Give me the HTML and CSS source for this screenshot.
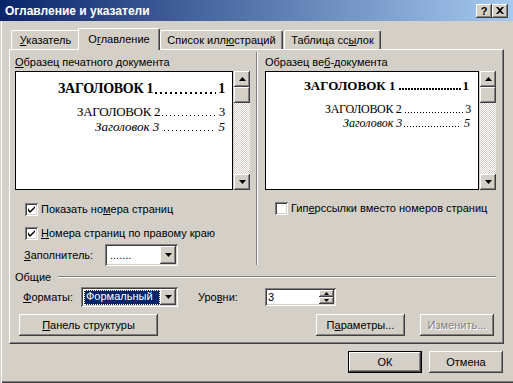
FILE: index.html
```html
<!DOCTYPE html>
<html lang="ru">

<head>
    <meta charset="UTF-8">
    <title>Оглавление и указатели</title>
    <link rel="stylesheet" href="styles.css">
</head>

<body>
    <div class="window">
        <div class="titlebar">
            <span class="title">Оглавление и указатели</span>
            <div class="title-buttons">
                <div class="tb-btn help">?</div>
                <div class="tb-btn close">
                    <svg width="8" height="7" viewBox="0 0 8 7"><path d="M0 0 L2 0 L4 2 L6 0 L8 0 L5 3.5 L8 7 L6 7 L4 5 L2 7 L0 7 L3 3.5 Z" fill="#000"/></svg>
                </div>
            </div>
        </div>

        <div class="content">
            <div class="tabs">
                <div class="tab tab-index"><u>У</u>казатель</div>
                <div class="tab tab-toc active">О<u>г</u>лавление</div>
                <div class="tab tab-figures">Список илл<u>ю</u>страций</div>
                <div class="tab tab-auth">Таблица сс<u>ы</u>лок</div>
            </div>

            <div class="panel">
                <div class="samples">
                    <div class="group group-print">
                        <div class="group-label"><u>О</u>бразец печатного документа</div>
                        <div class="preview">
                            <div class="sheet sheet-print">
                                <div class="toc toc1"><span>ЗАГОЛОВОК 1</span><span class="dots"></span><span>1</span></div>
                                <div class="toc toc2"><span>ЗАГОЛОВОК 2</span><span class="dots"></span><span>3</span></div>
                                <div class="toc toc3"><span>Заголовок 3</span><span class="dots"></span><span>5</span></div>
                            </div>
                            <div class="scrollbar">
                                <div class="sb-btn"><svg width="7" height="4"><polygon points="3.5,0 7,4 0,4" fill="#000"/></svg></div>
                                <div class="sb-thumb"></div>
                                <div class="sb-track"></div>
                                <div class="sb-btn"><svg width="7" height="4"><polygon points="0,0 7,0 3.5,4" fill="#000"/></svg></div>
                            </div>
                        </div>
                        <div class="check-row first">
                            <span class="checkbox"><svg width="7" height="7"><path d="M0 2 L0 5 L2 7 L7 2 L7 0 L2 5 Z" fill="#000"/></svg></span>
                            <span>Показать но<u>м</u>ера страниц</span>
                        </div>
                        <div class="check-row">
                            <span class="checkbox"><svg width="7" height="7"><path d="M0 2 L0 5 L2 7 L7 2 L7 0 L2 5 Z" fill="#000"/></svg></span>
                            <span><u>Н</u>омера страниц по правому краю</span>
                        </div>
                        <div class="filler-row">
                            <span class="field-label"><u>З</u>аполнитель:</span>
                            <div class="combo combo-filler">
                                <span class="combo-value">.......</span>
                                <div class="combo-btn"><svg width="7" height="4"><polygon points="0,0 7,0 3.5,4" fill="#000"/></svg></div>
                            </div>
                        </div>
                    </div>

                    <div class="vsep"></div>

                    <div class="group group-web">
                        <div class="group-label">Образец ве<u>б</u>-документа</div>
                        <div class="preview">
                            <div class="sheet sheet-web">
                                <div class="toc toc1"><span>ЗАГОЛОВОК 1</span><span class="dots"></span><span>1</span></div>
                                <div class="toc toc2"><span>ЗАГОЛОВОК 2</span><span class="dots"></span><span>3</span></div>
                                <div class="toc toc3"><span>Заголовок 3</span><span class="dots"></span><span>5</span></div>
                            </div>
                            <div class="scrollbar">
                                <div class="sb-btn"><svg width="7" height="4"><polygon points="3.5,0 7,4 0,4" fill="#000"/></svg></div>
                                <div class="sb-thumb"></div>
                                <div class="sb-track"></div>
                                <div class="sb-btn"><svg width="7" height="4"><polygon points="0,0 7,0 3.5,4" fill="#000"/></svg></div>
                            </div>
                        </div>
                        <div class="check-row web-check">
                            <span class="checkbox"></span>
                            <span>Гип<u>е</u>рссылки вместо номеров страниц</span>
                        </div>
                    </div>
                </div>

                <div class="legend">
                    <span>Общие</span>
                    <div class="hline"></div>
                </div>

                <div class="formats-row">
                    <span class="field-label label-formats"><u>Ф</u>орматы:</span>
                    <div class="combo combo-formats">
                        <span class="combo-selected">Формальный</span>
                        <div class="combo-btn"><svg width="7" height="4"><polygon points="0,0 7,0 3.5,4" fill="#000"/></svg></div>
                    </div>
                    <span class="field-label label-levels">Уро<u>в</u>ни:</span>
                    <div class="spin">
                        <span class="spin-value">3</span>
                        <div class="spin-btns">
                            <div class="spin-btn"><svg width="5" height="3"><polygon points="2.5,0 5,3 0,3" fill="#000"/></svg></div>
                            <div class="spin-btn"><svg width="5" height="3"><polygon points="0,0 5,0 2.5,3" fill="#000"/></svg></div>
                        </div>
                    </div>
                </div>

                <div class="panel-buttons">
                    <div class="button btn-outline"><u>П</u>анель структуры</div>
                    <div class="spacer"></div>
                    <div class="button btn-options">П<u>а</u>раметры...</div>
                    <div class="button btn-modify disabled">Изменить...</div>
                </div>
            </div>

            <div class="dialog-buttons">
                <div class="button btn-ok default">ОК</div>
                <div class="button btn-cancel">Отмена</div>
            </div>
        </div>
    </div>
</body>

</html>
```

FILE: styles.css
```css
* {
    margin: 0;
    padding: 0;
    box-sizing: border-box;
}

body {
    font-family: 'Liberation Sans', Arial, sans-serif;
    font-size: 11px;
    color: #000;
    background-color: #d4d0c8;
}

u {
    text-decoration: underline;
    text-underline-offset: 1px;
}

.window {
    width: 513px;
    height: 383px;
    background-color: #d4d0c8;
    display: flex;
    flex-direction: column;
    box-shadow: inset 1px 0 #d4d0c8, inset 2px 0 #fff, inset 0 -1px #404040, inset 0 -2px #808080;
}

/* title bar */

.titlebar {
    height: 21px;
    display: flex;
    align-items: center;
    justify-content: space-between;
    padding: 0 5px;
    background: linear-gradient(to right, #0a246a, #a6caf0);
}

.title {
    color: #fff;
    font-weight: bold;
    font-size: 12px;
    line-height: 14px;
}

.title-buttons {
    display: flex;
}

.tb-btn {
    width: 16px;
    height: 14px;
    background-color: #d4d0c8;
    box-shadow: inset -1px -1px #404040, inset 1px 1px #fff, inset -2px -2px #808080;
    display: flex;
    align-items: center;
    justify-content: center;
    font-weight: bold;
    font-size: 11px;
    line-height: 12px;
}

/* content */

.content {
    padding: 7px 9px 0 9px;
    display: flex;
    flex-direction: column;
}

.tabs {
    height: 21px;
    display: flex;
    align-items: flex-end;
    padding-left: 2px;
    position: relative;
    z-index: 1;
}

.tab {
    height: 19px;
    padding-top: 3px;
    text-align: center;
    line-height: 13px;
    border-top: 1px solid #fff;
    border-left: 1px solid #fff;
    border-right: 1px solid #404040;
    border-radius: 2px 2px 0 0;
    box-shadow: inset -1px 0 #808080;
    background-color: #d4d0c8;
}

.tab-index {
    width: 69px;
}

.tab-toc {
    width: 82px;
    margin: 0 -1px -1px -2px;
}

.tab.active {
    height: 22px;
    padding-top: 4px;
}

.tab-figures {
    width: 123px;
    margin-left: 1px;
}

.tab-auth {
    width: 97px;
    margin-left: 1px;
}

.panel {
    width: 495px;
    height: 295px;
    border-top: 1px solid #fff;
    border-left: 1px solid #fff;
    border-right: 1px solid #404040;
    border-bottom: 1px solid #404040;
    box-shadow: inset -1px -1px #808080;
    padding: 0 0 0 5px;
    display: flex;
    flex-direction: column;
}

.samples {
    display: flex;
    height: 220px;
}

.group-print {
    width: 241px;
}

.group-label {
    height: 13px;
    line-height: 13px;
    margin-top: 6px;
    margin-bottom: 2px;
}

.preview {
    height: 119px;
    display: flex;
}

.group-print .preview {
    width: 235px;
}

.sheet {
    flex: 1;
    background-color: #fff;
    border: 1px solid #000;
    display: flex;
    flex-direction: column;
    align-items: flex-end;
    font-family: 'Liberation Serif', 'Times New Roman', serif;
}

.sheet-print {
    padding: 8px 7px 0 0;
}

.sheet-web {
    padding: 6px 9px 0 0;
}

/* toc lines with dot leaders */

.toc {
    display: flex;
    white-space: nowrap;
}

.dots {
    flex: 1;
    background-image: linear-gradient(to right, #000 1px, transparent 1px);
    background-repeat: repeat-x;
    background-size: 4px 1px;
}

.sheet-print .toc1 {
    width: 167px;
    font-size: 14px;
    font-weight: bold;
    letter-spacing: -0.3px;
    line-height: 18px;
}

.sheet-print .toc1 .dots {
    margin: 0 2px 0 1px;
    background-image: linear-gradient(to right, #000 2px, transparent 2px);
    background-size: 5px 2px;
    background-position: 1px 12px;
}

.sheet-print .toc2 {
    width: 148px;
    font-size: 13px;
    letter-spacing: -0.3px;
    line-height: 15px;
    margin-top: 6px;
}

.sheet-print .toc2 .dots {
    margin: 0 4px 0 1px;
    background-position: 1px 11px;
}

.sheet-print .toc3 {
    width: 130px;
    font-size: 13px;
    line-height: 15px;
    font-style: italic;
}

.sheet-print .toc3 .dots {
    margin: 0 4px 0 4px;
    background-position: 1px 11px;
}

.sheet-web .toc1 {
    width: 165px;
    font-size: 13px;
    font-weight: bold;
    line-height: 16px;
}

.sheet-web .toc1 .dots {
    margin: 0 2px 0 4px;
    background-image: linear-gradient(to right, #000 2px, transparent 2px);
    background-size: 3px 2px;
    background-position: 0 10px;
}

.sheet-web .toc2 {
    width: 146px;
    font-size: 12px;
    letter-spacing: -0.3px;
    line-height: 14px;
    margin-top: 8px;
    margin-right: -2px;
}

.sheet-web .toc2 .dots {
    margin: 0 2px 0 3px;
    background-size: 3px 1px;
    background-position: 0 10px;
}

.sheet-web .toc3 {
    width: 127px;
    font-size: 12px;
    line-height: 14px;
    font-style: italic;
    margin-right: -1px;
}

.sheet-web .toc3 .dots {
    margin: 0 3px 0 2px;
    background-size: 3px 1px;
    background-position: 0 10px;
}

/* scrollbars and 3d buttons */

.scrollbar {
    width: 16px;
    margin-left: 1px;
    display: flex;
    flex-direction: column;
}

.sb-btn,
.sb-thumb,
.combo-btn,
.spin-btn {
    background-color: #d4d0c8;
    box-shadow: inset -1px -1px #404040, inset 1px 1px #fff, inset -2px -2px #808080;
    display: flex;
    align-items: center;
    justify-content: center;
}

.sb-btn,
.sb-thumb {
    height: 16px;
}

.sb-track {
    flex: 1;
    background: repeating-conic-gradient(#fff 0 25%, #d4d0c8 0 50%) 0 0 / 2px 2px;
}

.checkbox {
    width: 13px;
    height: 13px;
    background-color: #fff;
    box-shadow: inset 1px 1px #808080, inset -1px -1px #fff, inset 2px 2px #404040, inset -2px -2px #d4d0c8;
    display: flex;
    align-items: center;
    justify-content: center;
    margin-right: 3px;
}

.check-row {
    display: flex;
    align-items: center;
    height: 13px;
    line-height: 13px;
    margin-left: 10px;
    margin-top: 11px;
}

.check-row.first {
    margin-top: 13px;
}

.web-check {
    margin-top: 12px;
}

.filler-row {
    display: flex;
    align-items: center;
    margin-top: 4px;
    margin-left: 9px;
}

.filler-row .field-label {
    width: 81px;
}

.combo {
    height: 22px;
    background-color: #fff;
    box-shadow: inset 1px 1px #808080, inset -1px -1px #fff, inset 2px 2px #404040, inset -2px -2px #d4d0c8;
    display: flex;
    align-items: center;
    padding: 2px;
}

.combo-filler {
    width: 73px;
}

.combo-value {
    flex: 1;
    padding-left: 3px;
    line-height: 13px;
}

.combo-btn {
    width: 16px;
    height: 18px;
    margin-left: auto;
}

.vsep {
    width: 2px;
    height: 213px;
    margin-top: 2px;
    border-left: 1px solid #808080;
    border-right: 1px solid #fff;
}

.group-web {
    margin-left: 7px;
}

.group-web .preview {
    width: 231px;
}

/* general section */

.legend {
    display: flex;
    align-items: center;
    height: 14px;
    line-height: 13px;
}

.hline {
    flex: 1;
    height: 2px;
    margin: 0 7px;
    border-top: 1px solid #808080;
    border-bottom: 1px solid #fff;
}

.formats-row {
    display: flex;
    align-items: center;
    margin-top: 3px;
    height: 20px;
}

.label-formats {
    margin-left: 8px;
    width: 58px;
}

.combo-formats {
    width: 97px;
    height: 20px;
}

.combo-formats .combo-btn {
    height: 16px;
}

.combo-selected {
    background-color: #0a246a;
    color: #fff;
    width: 78px;
    height: 15px;
    line-height: 13px;
    padding-left: 2px;
    margin-left: 1px;
    outline: 1px dotted #fff;
    outline-offset: -1px;
}

.label-levels {
    margin-left: 20px;
    width: 67px;
}

.spin {
    width: 71px;
    height: 18px;
    background-color: #fff;
    box-shadow: inset 1px 1px #808080, inset -1px -1px #fff, inset 2px 2px #404040, inset -2px -2px #d4d0c8;
    display: flex;
    align-items: center;
    padding: 2px;
}

.spin-value {
    flex: 1;
    padding-left: 1px;
    line-height: 13px;
}

.spin-btns {
    display: flex;
    flex-direction: column;
    width: 15px;
    height: 14px;
}

.spin-btn {
    flex: 1;
}

.panel-buttons {
    display: flex;
    margin: 7px 9px 0 4px;
}

.spacer {
    flex: 1;
}

.button {
    height: 22px;
    line-height: 22px;
    text-align: center;
    background-color: #d4d0c8;
    box-shadow: inset -1px -1px #404040, inset 1px 1px #fff, inset -2px -2px #808080;
}

.btn-outline {
    width: 139px;
}

.btn-options {
    width: 89px;
}

.btn-modify {
    width: 74px;
    margin-left: 15px;
}

.button.disabled {
    color: #808080;
    text-shadow: 1px 1px #fff;
}

.dialog-buttons {
    display: flex;
    justify-content: flex-end;
    gap: 7px;
    margin: 7px 1px 0 0;
}

.btn-ok,
.btn-cancel {
    width: 74px;
}

.button.default {
    border: 1px solid #000;
    line-height: 20px;
}
```
